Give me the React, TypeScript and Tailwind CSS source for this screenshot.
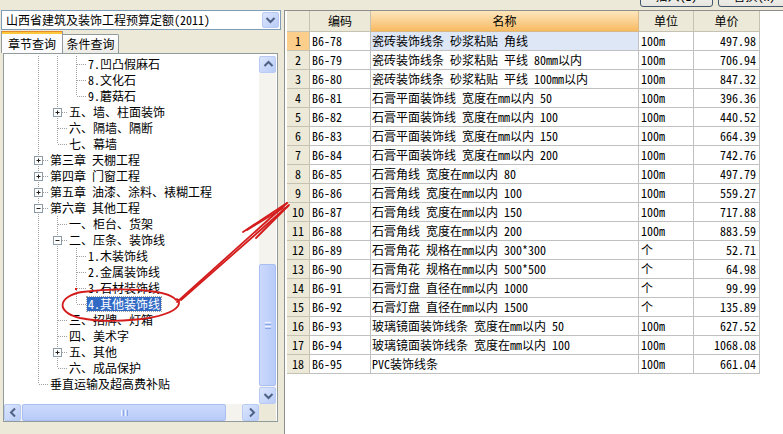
import React from "react";

type TNode = { t: string; anc: number[]; last: boolean; box?: "+" | "-"; sel?: boolean };

const tree: TNode[] = [
  { t: "7.凹凸假麻石", anc: [1, 1], last: false },
  { t: "8.文化石", anc: [1, 1], last: false },
  { t: "9.蘑菇石", anc: [1, 1], last: true },
  { t: "五、墙、柱面装饰", anc: [1], last: false, box: "+" },
  { t: "六、隔墙、隔断", anc: [1], last: false },
  { t: "七、幕墙", anc: [1], last: true },
  { t: "第三章 天棚工程", anc: [], last: false, box: "+" },
  { t: "第四章 门窗工程", anc: [], last: false, box: "+" },
  { t: "第五章 油漆、涂料、裱糊工程", anc: [], last: false, box: "+" },
  { t: "第六章 其他工程", anc: [], last: false, box: "-" },
  { t: "一、柜台、货架", anc: [1], last: false },
  { t: "二、压条、装饰线", anc: [1], last: false, box: "-" },
  { t: "1.木装饰线", anc: [1, 1], last: false },
  { t: "2.金属装饰线", anc: [1, 1], last: false },
  { t: "3.石材装饰线", anc: [1, 1], last: false },
  { t: "4.其他装饰线", anc: [1, 1], last: true, sel: true },
  { t: "三、招牌、灯箱", anc: [1], last: false },
  { t: "四、美术字", anc: [1], last: false },
  { t: "五、其他", anc: [1], last: false, box: "+" },
  { t: "六、成品保护", anc: [1], last: true },
  { t: "垂直运输及超高费补贴", anc: [], last: true },
];

const rows: [string, string, string, string][] = [
  ["B6-78", "瓷砖装饰线条 砂浆粘贴 角线", "100m", "497.98"],
  ["B6-79", "瓷砖装饰线条 砂浆粘贴 平线 80mm以内", "100m", "706.94"],
  ["B6-80", "瓷砖装饰线条 砂浆粘贴 平线 100mm以内", "100m", "847.32"],
  ["B6-81", "石膏平面装饰线 宽度在mm以内 50", "100m", "396.36"],
  ["B6-82", "石膏平面装饰线 宽度在mm以内 100", "100m", "440.52"],
  ["B6-83", "石膏平面装饰线 宽度在mm以内 150", "100m", "664.39"],
  ["B6-84", "石膏平面装饰线 宽度在mm以内 200", "100m", "742.76"],
  ["B6-85", "石膏角线 宽度在mm以内 80", "100m", "497.79"],
  ["B6-86", "石膏角线 宽度在mm以内 100", "100m", "559.27"],
  ["B6-87", "石膏角线 宽度在mm以内 150", "100m", "717.88"],
  ["B6-88", "石膏角线 宽度在mm以内 200", "100m", "883.59"],
  ["B6-89", "石膏角花 规格在mm以内 300*300", "个", "52.71"],
  ["B6-90", "石膏角花 规格在mm以内 500*500", "个", "64.98"],
  ["B6-91", "石膏灯盘 直径在mm以内 1000", "个", "99.99"],
  ["B6-92", "石膏灯盘 直径在mm以内 1500", "个", "135.89"],
  ["B6-93", "玻璃镜面装饰线条 宽度在mm以内 50", "100m", "627.52"],
  ["B6-94", "玻璃镜面装饰线条 宽度在mm以内 100", "100m", "1068.08"],
  ["B6-95", "PVC装饰线条", "100m", "661.04"],
];

function GuideCell({ through }: { through: boolean }) {
  return (
    <svg width="19" height="16" className="shrink-0 block">
      {through && <line x1="9.5" y1="0" x2="9.5" y2="16" stroke="#A0A0A0" strokeDasharray="1 1" />}
    </svg>
  );
}

function OwnCell({ last, box }: { last: boolean; box?: "+" | "-" }) {
  return (
    <svg width="19" height="16" className="shrink-0 block">
      <line x1="9.5" y1="0" x2="9.5" y2={last ? 8 : 16} stroke="#A0A0A0" strokeDasharray="1 1" />
      <line x1="10" y1="8.5" x2="19" y2="8.5" stroke="#A0A0A0" strokeDasharray="1 1" />
      {box && (
        <g>
          <rect x="5.5" y="4.5" width="8" height="8" fill="#FFFFFF" stroke="#8C9CA8" />
          <line x1="7.5" y1="8.5" x2="11.5" y2="8.5" stroke="#1E1E1E" />
          {box === "+" && <line x1="9.5" y1="6.5" x2="9.5" y2="10.5" stroke="#1E1E1E" />}
        </g>
      )}
    </svg>
  );
}

function Arrow({ dir }: { dir: "up" | "down" | "left" | "right" }) {
  const pts =
    dir === "up"
      ? "4.5,10 8.5,6 12.5,10"
      : dir === "down"
      ? "4.5,7 8.5,11 12.5,7"
      : dir === "left"
      ? "10,4.5 6,8.5 10,12.5"
      : "7,4.5 11,8.5 7,12.5";
  return (
    <svg width="17" height="17" className="block">
      <polyline points={pts} fill="none" stroke="#4D6185" strokeWidth="2" />
    </svg>
  );
}

function SBtn({ dir }: { dir: "up" | "down" | "left" | "right" }) {
  return (
    <div className="w-[17px] h-[17px] shrink-0 rounded-[2px] border border-[#B7CBF5] bg-gradient-to-br from-[#DCE6FD] to-[#B9CCF7] flex items-center justify-center">
      <Arrow dir={dir} />
    </div>
  );
}

export default function App() {
  return (
    <div className="relative w-[783px] h-[434px] overflow-hidden bg-[#ECE9D8] flex text-[12px] text-black font-[family-name:'Noto_Sans_Mono_CJK_SC','Noto_Sans_CJK_SC',sans-serif]">
      {/* Left panel */}
      <div className="w-[281px] shrink-0 flex flex-col">
        {/* combo */}
        <div className="mt-[10px] ml-[1px] w-[280px] h-[20px] border border-[#7F9DB9] bg-white flex items-center">
          <div className="flex-1 pl-[4px] leading-[18px] whitespace-nowrap">山西省建筑及装饰工程预算定额(2011)</div>
          <div className="w-[17px] h-[16px] mr-[1px] rounded-[2px] border border-[#B7CBF5] bg-gradient-to-br from-[#DCE6FD] to-[#B9CCF7] flex items-center justify-center">
            <svg width="15" height="14" className="block">
              <polyline points="3.5,5 7.5,9 11.5,5" fill="none" stroke="#4D6185" strokeWidth="2" />
            </svg>
          </div>
        </div>
        {/* tabs */}
        <div className="mt-[1px] ml-[1px] h-[22px] flex items-end">
          <div className="w-[62px] h-[22px] flex flex-col border-x border-[#919B9C] bg-[#FCFCFE]">
            <div className="h-[1px] bg-[#E68B2C]" />
            <div className="h-[2px] bg-[#FFC73C]" />
            <div className="flex-1 flex items-center justify-center leading-[16px]">章节查询</div>
          </div>
          <div className="w-[56px] h-[19px] border-t border-r border-[#919B9C] rounded-tr-[2px] bg-gradient-to-b from-[#FFFFFF] to-[#ECEBE6] flex items-center justify-center leading-[16px]">
            条件查询
          </div>
        </div>
        {/* tree panel */}
        <div className="ml-[3px] w-[275px] h-[369px] border border-[#919B9C] bg-white flex flex-col pr-[1px]">
          <div className="flex-1 flex pt-[2px] min-h-0">
            <div className="flex-1 overflow-hidden">
              {tree.map((n, i) => (
                <div key={i} className="flex h-[16px] items-center pl-[25px] whitespace-nowrap">
                  {n.anc.map((a, j) => (
                    <GuideCell key={j} through={!!a} />
                  ))}
                  <OwnCell last={n.last} box={n.box} />
                  {n.sel ? (
                    <span className="ml-[1px] px-[1px] leading-[14px] bg-[#316AC5] text-white outline outline-1 outline-dotted outline-[#A0A0A0]">
                      {n.t}
                    </span>
                  ) : (
                    <span className="ml-[2px] leading-[16px]">{n.t}</span>
                  )}
                </div>
              ))}
            </div>
            {/* vertical scrollbar */}
            <div className="w-[17px] shrink-0 flex flex-col bg-[#F4F3EE]">
              <SBtn dir="up" />
              <div className="flex-1 flex flex-col justify-end">
                <div className="h-[122px] mb-[1px] rounded-[2px] border border-[#A9BEF2] bg-gradient-to-r from-[#CBD9FC] to-[#B8CBF8] flex flex-col items-center justify-center gap-[1px]">
                  <div className="w-[6px] h-[1px] bg-[#EEF3FE]" />
                  <div className="w-[6px] h-[1px] bg-[#8CA6E6]" />
                  <div className="w-[6px] h-[1px] bg-[#EEF3FE]" />
                  <div className="w-[6px] h-[1px] bg-[#8CA6E6]" />
                </div>
              </div>
              <SBtn dir="down" />
            </div>
          </div>
          {/* horizontal scrollbar */}
          <div className="h-[17px] shrink-0 flex">
            <div className="flex-1 flex bg-[#F4F3EE]">
              <SBtn dir="left" />
              <div className="flex-1 flex">
                <div className="w-[204px] ml-[1px] rounded-[2px] border border-[#A9BEF2] bg-gradient-to-b from-[#CBD9FC] to-[#B8CBF8] flex items-center justify-center gap-[1px]">
                  <div className="w-[1px] h-[6px] bg-[#EEF3FE]" />
                  <div className="w-[1px] h-[6px] bg-[#8CA6E6]" />
                  <div className="w-[1px] h-[6px] bg-[#EEF3FE]" />
                  <div className="w-[1px] h-[6px] bg-[#8CA6E6]" />
                </div>
              </div>
              <SBtn dir="right" />
            </div>
            <div className="w-[17px] bg-[#ECE9D8]" />
          </div>
        </div>
      </div>

      {/* Right panel */}
      <div className="flex-1 flex flex-col min-w-0">
        <div className="h-[10px] shrink-0 overflow-hidden flex items-end pl-[359px] gap-[5px]">
          <div className="w-[73px] h-[22px] mb-[3px] shrink-0 rounded-[3px] border border-[#44566B] bg-gradient-to-b from-[#FFFFFF] to-[#E6E5DF] flex items-center justify-center leading-[16px]">
            插入(I)
          </div>
          <div className="w-[73px] h-[22px] mb-[3px] shrink-0 rounded-[3px] border border-[#44566B] bg-gradient-to-b from-[#FFFFFF] to-[#E6E5DF] flex items-center justify-center leading-[16px]">
            替换(R)
          </div>
        </div>
        <div className="flex-1 ml-[3px] border-l border-t border-[#8E8E8E] bg-white pl-[2px]">
          {/* header */}
          <div className="flex h-[21px]">
            <div className="w-[23px] shrink-0 bg-[#ECE9D8] border-r border-b border-[#C5C2B2]" />
            <div className="w-[61px] shrink-0 bg-[#ECE9D8] border-r border-b border-[#C5C2B2] flex items-center justify-center">编码</div>
            <div className="w-[268px] shrink-0 bg-gradient-to-b from-[#FDE6BC] to-[#F7BA60] border-r border-b border-[#D8B888] flex items-center justify-center">名称</div>
            <div className="w-[55px] shrink-0 bg-[#ECE9D8] border-r border-b border-[#C5C2B2] flex items-center justify-center">单位</div>
            <div className="w-[66px] shrink-0 bg-[#ECE9D8] border-r border-b border-[#C5C2B2] flex items-center justify-center">单价</div>
          </div>
          {rows.map((r, i) => (
            <div key={i} className="flex h-[19px] whitespace-nowrap">
              <div
                className={`w-[23px] shrink-0 border-r border-b border-[#C5C2B2] flex items-center justify-center ${
                  i === 0 ? "bg-[#FBCF8B]" : "bg-[#ECE9D8]"
                }`}
              >
                {i + 1}
              </div>
              <div className="w-[61px] shrink-0 border-r border-b border-[#C0C0C0] flex items-center pl-[2px]">{r[0]}</div>
              <div
                className={`w-[268px] shrink-0 border-r border-b border-[#C0C0C0] flex items-center pl-[1px] whitespace-pre ${
                  i === 0 ? "bg-[#DDE7F5]" : ""
                }`}
              >
                {r[1]}
              </div>
              <div className="w-[55px] shrink-0 border-r border-b border-[#C0C0C0] flex items-center pl-[2px]">{r[2]}</div>
              <div className="w-[66px] shrink-0 border-r border-b border-[#C0C0C0] flex items-center justify-end pr-[3px]">{r[3]}</div>
            </div>
          ))}
        </div>
      </div>

      {/* red annotation overlay */}
      <svg className="absolute left-0 top-0 pointer-events-none" width="783" height="434">
        <g fill="none" stroke="#D41C1C" strokeWidth="1.8" strokeLinecap="round" strokeLinejoin="round">
          <path d="M 176 300 C 168 289, 118 287, 82 292 C 58 296, 55 312, 80 318 C 110 324, 168 320, 178 306 C 180 302, 179 300, 177 299" />
          <path d="M 177 302 L 287 203" />
          <path d="M 181 300 L 289 205" />
          <path d="M 287 203 L 243 232" />
          <path d="M 288 206 L 256 238" />
          <path d="M 283 208 L 247 230" />
        </g>
        <rect x="75" y="288" width="2" height="2" fill="#D41C1C" />
      </svg>
    </div>
  );
}
